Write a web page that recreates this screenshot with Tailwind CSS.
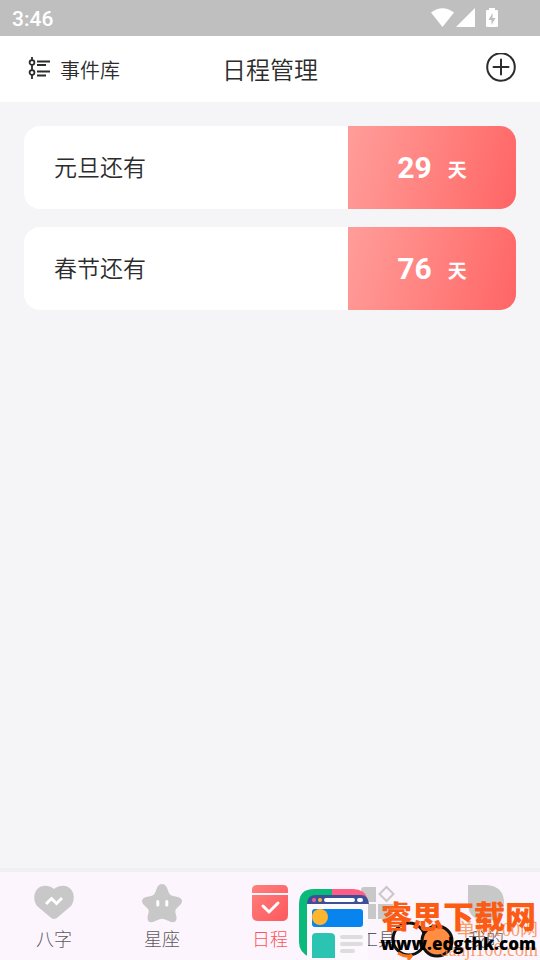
<!DOCTYPE html>
<html lang="zh-CN">
<head>
<meta charset="utf-8">
<meta name="viewport" content="width=device-width, initial-scale=1">
<title>日程管理</title>
<script src="https://cdn.jsdelivr.net/npm/@tailwindcss/browser@4"></script>
</head>
<body class="relative flex min-h-screen flex-col overflow-x-hidden bg-[#f5f5f8] font-['Roboto','Noto_Sans_CJK_SC',sans-serif] text-[#2c2c2c]">
  <div class="flex h-9 items-center justify-between bg-[#bfbfbf] pr-[42px] pl-3 text-white">
    <span class="pt-0.5 text-[21px] leading-6 font-medium">3:46</span>
    <div class="flex items-center">
      <svg class="h-5 w-6" viewBox="0 0 24 20" fill="currentColor"><path d="M1 4.500Q12.500-4 24 4.500L12.500 19Z"/></svg>
      <svg class="ml-0.5 h-5 w-5" viewBox="0 0 20 20" fill="currentColor"><path d="M0 19 19 0V19Z"/></svg>
      <svg class="ml-2.5 h-5 w-3" viewBox="0 0 12 20"><path fill="currentColor" d="M3 0h6v2h2q1 0 1 1v15q0 1-1 1H1q-1 0-1-1V3q0-1 1-1h2Z"/><path fill="#bfbfbf" d="M6.500 5 2.500 12H5.500V17L9.500 10H6.500Z"/></svg>
    </div>
  </div>

  <header class="grid grid-cols-[1fr_auto_1fr] items-center bg-white px-6 py-[15px]">
    <a href="#events" class="flex items-center gap-2 pl-1 text-[20px] leading-8 font-[350]">
      <svg class="h-6 w-6" viewBox="0 0 24 24" fill="none" stroke="currentColor" stroke-width="1.800"><path d="M4 0v3M4 8v5M4 18v4"/><circle cx="4" cy="5.500" r="2.400"/><circle cx="4" cy="15.500" r="2.400"/><path d="M9 4.500h13M9 8h9M9 14.500h13M9 18.500h9"/></svg>
      <span class="pt-1">事件库</span>
    </a>
    <h1 class="pt-1 text-2xl leading-8 font-[350]">日程管理</h1>
    <button type="button" aria-label="添加日程" class="justify-self-end">
      <svg class="block h-8 w-8" viewBox="0 0 32 32" fill="none" stroke="currentColor" stroke-width="2"><circle cx="17" cy="14" r="13.800"/><path d="M17 6.500v15M9.500 14h15" stroke-linecap="round"/></svg>
    </button>
  </header>

  <main class="flex flex-1 flex-col gap-[18px] px-6 pt-6">
    <a href="#newyear" class="flex h-[83px] overflow-hidden rounded-2xl bg-white">
      <span class="flex flex-1 items-center pt-1 pl-[30px] text-[23px] font-[350]">元旦还有</span>
      <span class="flex w-[168px] items-center justify-center gap-4 bg-linear-105 from-[#ff9d9a] to-[#ff6465] font-bold text-white"><span class="text-[30px]">29</span><span class="pt-2 text-[19px]">天</span></span>
    </a>
    <a href="#spring" class="flex h-[83px] overflow-hidden rounded-2xl bg-white">
      <span class="flex flex-1 items-center pt-1 pl-[30px] text-[23px] font-[350]">春节还有</span>
      <span class="flex w-[168px] items-center justify-center gap-4 bg-linear-105 from-[#ff9d9a] to-[#ff6465] font-bold text-white"><span class="text-[30px]">76</span><span class="pt-2 text-[19px]">天</span></span>
    </a>
  </main>

  <nav class="grid h-[92px] grid-cols-5 border-t-4 border-[#f0eff2] bg-[#fdf5fd] pt-3 text-lg leading-8 font-light text-[#5c5a5e]">
    <a href="#bazi" class="flex flex-col items-center">
      <svg class="h-10 w-10 shrink-0" viewBox="0 0 40 40"><path fill="#c8c8c8" d="M20 5C14 0 6 1 2.500 6C-1 11 0 18 3 22L16 33Q20 37 24 33L37 22C40 18 41 11 37.500 6C34 1 26 0 20 5Z"/><path d="m12 20 5.500-5.500 5 5 5.500-5.500" fill="none" stroke="#fff" stroke-width="3"/></svg>
      <span>八字</span>
    </a>
    <a href="#stars" class="flex flex-col items-center">
      <svg class="h-10 w-10 shrink-0" viewBox="0 0 40 40"><path fill="#c8c8c8" d="M20 0Q23.500 0 25 4L27 9Q28 11.500 31 12L36 13Q42 15 39 20L34 25Q33 26.500 33.500 29L34.500 33Q35 39 29 38L23 35.500Q20 34 17 35.500L11 38Q5 39 5.500 33L6.500 29Q7 26.500 6 25L1 20Q-2 15 4 13L9 12Q12 11.500 13 9L15 4Q16.500 0 20 0Z"/><path d="M15.800 17.500v3.500M24.800 17.500v3.500" stroke="#fff" stroke-width="3" stroke-linecap="round"/></svg>
      <span>星座</span>
    </a>
    <a href="#schedule" aria-current="page" class="flex flex-col items-center text-[#fb5458]">
      <svg class="h-10 w-10 shrink-0" viewBox="0 0 40 40"><defs><linearGradient id="cal" x1="0" y1="0" x2="1" y2="1"><stop stop-color="#ff7f7d"/><stop offset="1" stop-color="#fd595d"/></linearGradient></defs><path fill="url(#cal)" d="M2 9V6q0-5 5-5h26q5 0 5 5v3ZM2 11h36v20q0 6-6 6H8q-6 0-6-6Z"/><path d="m13 22 6 6 9-9" fill="none" stroke="#fff" stroke-width="3" stroke-linecap="round"/></svg>
      <span>日程</span>
    </a>
    <a href="#tools" class="flex flex-col items-center">
      <svg class="h-10 w-10 shrink-0" viewBox="0 0 40 40"><path fill="#c8c8c8" d="M6 3h12v15H3V6q0-3 3-3ZM3 20h15v15H6q-3 0-3-3ZM20 20h15v12q0 3-3 3H20Z"/><path d="m28.500 3 7 7-7 7-7-7Z" fill="none" stroke="#c8c8c8" stroke-width="2"/></svg>
      <span>工具</span>
    </a>
    <a href="#mine" class="flex flex-col items-center">
      <svg class="h-10 w-10 shrink-0" viewBox="0 0 40 40"><path fill="#c8c8c8" d="M2 1h18q18 1 18 18T20 37Q2 36 2 19Z"/></svg>
      <span>我的</span>
    </a>
  </nav>

  <div class="pointer-events-none absolute right-0 bottom-0 h-[72px] w-[242px] overflow-hidden">
    <svg class="absolute bottom-0 left-0 h-[72px] w-[72px]" viewBox="0 0 72 72">
      <path fill="#09ba7b" d="M16 1h18v16H12v52Q1 65 1 54V16Q1 1 16 1Z"/><path fill="#ff5d84" d="M34 1h21q12 0 15 11H34Z"/>
      <path fill="#fdf8fd" d="M9 15h61v57H9Z"/><path fill="#3c5097" d="M9 16q0-9 9-9h45q7 0 8 9Z"/>
      <circle cx="16" cy="12" r="2" fill="#ee5b9b"/><circle cx="22" cy="12" r="2" fill="#ffb52e"/><path stroke="#fff" stroke-width="4" stroke-linecap="round" d="M28 12h27M61 12h2"/>
      <rect x="14" y="21" width="51" height="18" rx="3" fill="#0784ed"/><circle cx="22" cy="29" r="8" fill="#ffb52e"/><path fill="#2bc4b3" d="M14 70V49q0-4 4-4h14q5 0 5 4v21Z"/>
      <path stroke="#ddd" stroke-width="4" stroke-linecap="round" d="M44 49h19M44 56h19M44 63h11"/>
    </svg>
    <svg class="absolute bottom-0 left-[92px] h-10 w-16" viewBox="0 0 64 40"><circle cx="19" cy="19" r="16" fill="none" stroke="#111" stroke-width="3"/><path d="M8 33q8 5 14 2l-4 5" fill="none" stroke="#ff7417" stroke-width="3"/><circle cx="47" cy="21" r="15" fill="#ff8d42" stroke="#111" stroke-width="3"/></svg>
    <div class="absolute right-0.5 bottom-0 text-right font-['Liberation_Serif','Noto_Sans_CJK_SC',serif] text-[18px] leading-5 whitespace-nowrap text-[#f7863f]/80">单机100网<br>danji100.com</div>
    <div class="absolute right-1 bottom-0 flex flex-col items-end whitespace-nowrap">
      <span class="text-[31px] leading-7 font-black text-[#fb5b12]">睿思下载网</span>
      <span class="pb-1 font-['Open_Sans',sans-serif] text-[17px] leading-6 font-extrabold text-black">www.edgthk.com</span>
    </div>
  </div>
</body>
</html>
